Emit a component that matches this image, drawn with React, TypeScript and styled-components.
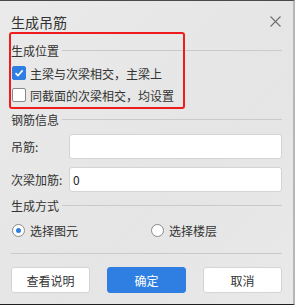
import styled, { createGlobalStyle } from 'styled-components';

const GlobalStyle = createGlobalStyle`
  html, body {
    margin: 0;
    padding: 0;
    background: #e7e8e7;
  }
  * {
    box-sizing: border-box;
  }
`;

const Dialog = styled.div`
  position: relative;
  width: 295px;
  height: 305px;
  padding: 0 11px;
  background: linear-gradient(135deg, #e9eae9 0%, #e4e5e4 60%, #e8e9e8 100%);
  border-top: 1px solid #4a4a4a;
  border-bottom: 1px solid #202020;
  border-right: 2px solid #b5b6b5;
  font-family: 'Noto Sans CJK SC', 'Noto Sans', sans-serif;
  color: #333333;
  display: flex;
  flex-direction: column;
`;

const Header = styled.div`
  height: 41px;
  display: flex;
  align-items: center;
  justify-content: space-between;
`;

const Title = styled.div`
  font-size: 14px;
  line-height: 18px;
  color: #333333;
`;

const CloseButton = styled.div`
  width: 11px;
  height: 11px;
  margin-right: 1px;
  display: flex;
  color: #6f6f6f;
`;

const Highlight = styled.div`
  position: absolute;
  left: 9px;
  top: 31px;
  width: 176px;
  height: 77px;
  border: 2px solid #ee1c1c;
  border-radius: 3px;
  pointer-events: none;
`;

const SectionTitle = styled.div<{ $gap: number }>`
  margin-top: ${p => p.$gap}px;
  height: 16px;
  display: flex;
  align-items: center;
  font-size: 12px;
  line-height: 16px;
  color: #333333;

  &::after {
    content: '';
    flex: 1;
    height: 1px;
    margin-left: 3px;
    margin-top: -1px;
    background: #c9caca;
  }
`;

const OptionRow = styled.label<{ $gap?: number }>`
  margin-top: ${p => p.$gap ?? 0}px;
  height: 22px;
  display: flex;
  align-items: center;
  gap: 4px;
  padding-left: 1px;
  font-size: 12px;
  color: #333333;
`;

const CheckBox = styled.span<{ $checked?: boolean }>`
  width: 14px;
  height: 14px;
  border-radius: 2px;
  display: flex;
  align-items: center;
  justify-content: center;
  background: ${p => (p.$checked ? '#2f7fe2' : '#ffffff')};
  border: 1px solid ${p => (p.$checked ? '#2f7fe2' : '#8a8a8a')};
`;

const FieldRow = styled.div<{ $gap: number }>`
  margin-top: ${p => p.$gap}px;
  height: 25px;
  display: flex;
  align-items: center;
`;

const FieldLabel = styled.div`
  width: 58px;
  font-size: 12px;
  color: #333333;
`;

const TextBox = styled.div`
  flex: 1;
  height: 25px;
  background: #ffffff;
  border: 1px solid #d3d4d4;
  border-radius: 3px;
  padding-left: 3px;
  display: flex;
  align-items: center;
  font-size: 12px;
  color: #222222;
`;

const RadioGroup = styled.div`
  margin-top: 6px;
  height: 20px;
  display: flex;
  align-items: center;
`;

const RadioOption = styled.label<{ $width?: number }>`
  width: ${p => (p.$width ? `${p.$width}px` : 'auto')};
  display: flex;
  align-items: center;
  gap: 5px;
  padding-left: 1px;
  font-size: 12px;
  color: #333333;
`;

const RadioDot = styled.span<{ $checked?: boolean }>`
  width: 13px;
  height: 13px;
  border-radius: 50%;
  background: #ffffff;
  border: 1px solid #8a8a8a;
  display: flex;
  align-items: center;
  justify-content: center;

  &::after {
    content: '';
    width: 5px;
    height: 5px;
    border-radius: 50%;
    background: ${p => (p.$checked ? '#2f7fe2' : 'transparent')};
  }
`;

const Divider = styled.div`
  margin-top: 13px;
  height: 1px;
  background: #c9caca;
`;

const ButtonBar = styled.div`
  margin-top: 13px;
  display: flex;
  justify-content: space-between;
`;

const Button = styled.div<{ $primary?: boolean }>`
  width: 79px;
  height: 26px;
  border-radius: 3px;
  display: flex;
  align-items: center;
  justify-content: center;
  font-size: 12px;
  background: ${p => (p.$primary ? '#2e7fe1' : '#ffffff')};
  color: ${p => (p.$primary ? '#ffffff' : '#333333')};
  border: 1px solid ${p => (p.$primary ? '#2e7fe1' : '#d3d4d4')};
`;

function Check() {
  return (
    <svg width="10" height="10" viewBox="0 0 10 10">
      <path d="M1.5 5.2 L4 7.6 L8.6 2.4" fill="none" stroke="#ffffff" strokeWidth="1.6" />
    </svg>
  );
}

export default function App() {
  return (
    <>
      <GlobalStyle />
      <Dialog>
        <Header>
          <Title>生成吊筋</Title>
          <CloseButton>
            <svg width="11" height="11" viewBox="0 0 11 11">
              <path d="M0.5 0.5 L10.5 10.5 M10.5 0.5 L0.5 10.5" stroke="currentColor" strokeWidth="1.1" />
            </svg>
          </CloseButton>
        </Header>

        <SectionTitle $gap={1}>生成位置</SectionTitle>
        <OptionRow $gap={3}>
          <CheckBox $checked>
            <Check />
          </CheckBox>
          主梁与次梁相交，主梁上
        </OptionRow>
        <OptionRow>
          <CheckBox />
          同截面的次梁相交，均设置
        </OptionRow>

        <SectionTitle $gap={6}>钢筋信息</SectionTitle>
        <FieldRow $gap={6}>
          <FieldLabel>吊筋:</FieldLabel>
          <TextBox />
        </FieldRow>
        <FieldRow $gap={8}>
          <FieldLabel>次梁加筋:</FieldLabel>
          <TextBox>0</TextBox>
        </FieldRow>

        <SectionTitle $gap={6}>生成方式</SectionTitle>
        <RadioGroup>
          <RadioOption $width={139}>
            <RadioDot $checked />
            选择图元
          </RadioOption>
          <RadioOption>
            <RadioDot />
            选择楼层
          </RadioOption>
        </RadioGroup>

        <Divider />
        <ButtonBar>
          <Button>查看说明</Button>
          <Button $primary>确定</Button>
          <Button>取消</Button>
        </ButtonBar>

        <Highlight />
      </Dialog>
    </>
  );
}
